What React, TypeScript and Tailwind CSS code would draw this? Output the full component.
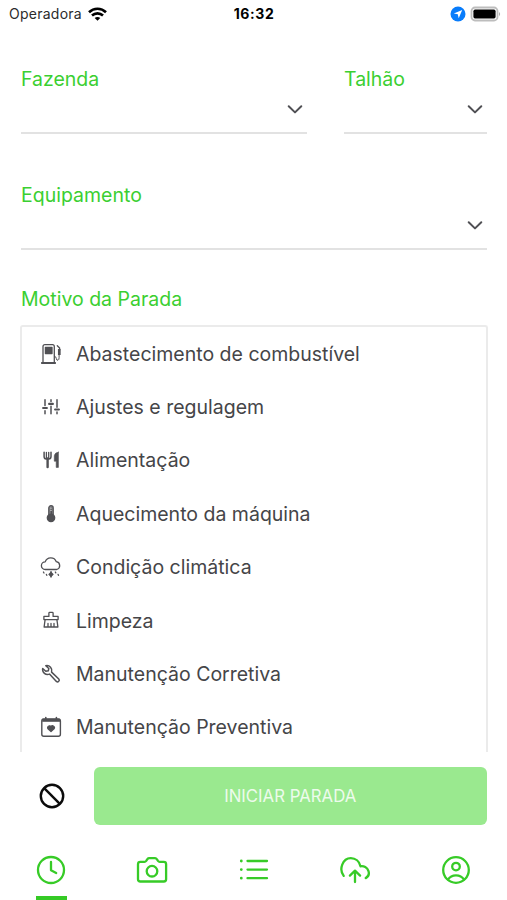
import { ReactNode } from "react";

interface ReasonIconProps {
  children: ReactNode;
}

const ReasonIcon: React.FC<ReasonIconProps> = ({ children }) => (
  <svg
    width="24"
    height="24"
    viewBox="0 0 24 24"
    fill="none"
    stroke="#505054"
    strokeWidth="1.3"
    strokeLinecap="round"
    strokeLinejoin="round"
    className="shrink-0"
  >
    {children}
  </svg>
);

const reasons = [
  {
    label: "Abastecimento de combustível",
    icon: (
      <ReasonIcon>
        <path d="M4 20.5V4.6Q4 2.7 5.9 2.7h7.6q1.8 0 1.8 1.9v15.9" />
        <path d="M2.8 21h13.4" strokeWidth="1.8" />
        <path d="M6.4 5.3h6.6v6.2H6.4z" fill="#505054" />
        <path d="M15.5 14.2q1.6.2 1.8 2.3t1.7 1.7q1.1-.4 1.1-2.5V12.5" strokeWidth="1" />
        <path d="M20.3 7v6" strokeWidth="2.7" strokeLinecap="butt" />
        <path d="M18.3 3.8l2.3 2.2v2" />
      </ReasonIcon>
    ),
  },
  {
    label: "Ajustes e regulagem",
    icon: (
      <ReasonIcon>
        <path d="M6 4.8v5.8M6 15.7v3M12 4.8v1.6M12 11.3v7.4M18 4.8v7.5M18 17v1.7" strokeWidth="1.5" />
        <path d="M4.1 13h3.8M10.1 8.9h3.8M16.1 14.5h3.8" strokeWidth="2.1" />
      </ReasonIcon>
    ),
  },
  {
    label: "Alimentação",
    icon: (
      <ReasonIcon>
        <path d="M5.1 4.3v4.2q0 2.4 2.2 2.6h2.4q2.3-.2 2.3-2.6V4.3" strokeWidth="1.5" />
        <path d="M7.4 4.3v6M9.7 4.3v6" strokeWidth="1.3" />
        <path d="M8.6 10.5v8.6" strokeWidth="2.4" />
        <path d="M19.4 4.2v15.2h-2.2v-6.2h-1.9V7.7q.5-3.1 4.1-3.5z" fill="#505054" strokeWidth=".6" />
      </ReasonIcon>
    ),
  },
  {
    label: "Aquecimento da máquina",
    icon: (
      <ReasonIcon>
        <path d="M9.8 12.6V5.9a2.2 2.2 0 0 1 4.4 0v6.7" fill="#8a8a8e" />
        <circle cx="12" cy="15.8" r="3.7" fill="#505054" />
        <path d="M12.3 6v7" strokeWidth="1.6" />
        <path d="M11.4 6.2h1.2M11.4 8.3h1.2" stroke="#ddd" strokeWidth=".7" />
      </ReasonIcon>
    ),
  },
  {
    label: "Condição climática",
    icon: (
      <ReasonIcon>
        <path d="M6.2 14.5a3.8 3.8 0 0 1 0-7.6 5.9 5.9 0 0 1 11.1-.2 4 4 0 0 1 .5 7.8z" />
        <path d="M4.4 17l.6 1M7.4 19.4l.4.9M16.3 17l.5.9M19.1 19.4l.4.9" />
        <path d="M12 16.7v5.3" strokeWidth="1.5" />
        <path d="M12 17.5l2 1.9-2 1.9-2-1.9z" fill="#505054" />
      </ReasonIcon>
    ),
  },
  {
    label: "Limpeza",
    icon: (
      <ReasonIcon>
        <path d="M4.9 11.6V8.4h5V5.2q0-.8.8-.8h2.6q.8 0 .8.8v3.2h5v3.2z" />
        <path d="M6.1 11.7l-1 7.3h13.8l-1-7.3M9 15.5v3.2M12 15.5v3.2M15 15.5v3.2" />
      </ReasonIcon>
    ),
  },
  {
    label: "Manutenção Corretiva",
    icon: (
      <ReasonIcon>
        <path
          d="M6.8 3.7l3 2.8-.5 2.3-2.5.5-3.1-2.8a5 5 0 0 0 6.8 5.6l6.9 7.3a1.7 1.7 0 0 0 2.4-2.4l-7.2-6.9A5 5 0 0 0 6.8 3.7z"
          strokeWidth="1.5"
        />
      </ReasonIcon>
    ),
  },
  {
    label: "Manutenção Preventiva",
    icon: (
      <ReasonIcon>
        <rect x="2.8" y="4" width="18.6" height="17.3" rx="2" strokeWidth="1.4" />
        <path d="M3.2 5.3h17.8" strokeWidth="3" strokeLinecap="butt" />
        <path d="M6.8 2.6v2M17.4 2.6v2" strokeWidth="1.6" />
        <path d="M12 16.6l-3-2.8a1.7 1.7 0 0 1 3-2.2 1.7 1.7 0 0 1 3 2.2z" fill="#505054" />
      </ReasonIcon>
    ),
  },
];

interface SelectFieldProps {
  label: string;
  className?: string;
}

const SelectField: React.FC<SelectFieldProps> = ({ label, className }) => (
  <div className={className}>
    <label className="block h-6 text-[19.5px] leading-6 text-[#3bcf31]">{label}</label>
    <button className="flex h-[43px] w-full items-start justify-end border-b-2 border-[#e2e2e2] pt-[10px] pr-1">
      <svg
        width="16"
        height="16"
        viewBox="0 0 16 16"
        fill="none"
        stroke="#505054"
        strokeWidth="2"
        strokeLinecap="round"
        strokeLinejoin="round"
      >
        <path d="M1.7 5.3L8 11.4l6.3-6.1" />
      </svg>
    </button>
  </div>
);

const tabs = [
  {
    name: "clock",
    icon: (
      <>
        <circle cx="16" cy="16" r="13" />
        <path d="M16 8v8.3l5.2 2.7" />
      </>
    ),
  },
  {
    name: "camera",
    icon: (
      <>
        <path d="M4.3 7.9h4.2q1 0 1.7-1l1.2-1.8q.7-1 1.8-1h5.9q1.1 0 1.7 1L22 6.9q.7 1 1.7 1h4.1q2.3 0 2.3 2.3v15q0 2.3-2.3 2.3H4.3Q2 27.5 2 25.2v-15q0-2.3 2.3-2.3z" />
        <circle cx="16" cy="17.2" r="5.3" />
      </>
    ),
  },
  {
    name: "list",
    icon: (
      <>
        <path d="M9.5 7h19.5M9.5 15.6h19.5M9.5 24.2h19.5" />
        <path d="M3.3 7h.01M3.3 15.6h.01M3.3 24.2h.01" strokeWidth="2.8" />
      </>
    ),
  },
  {
    name: "upload",
    icon: (
      <>
        <path d="M4.7 21.9C-.4 15.3 3.6 4.2 11.8 4.2c4.7 0 8.600 3.3 9.7 8.1 3.3-.7 6.8 1.3 7.9 4.6 1 3-.1 5.9-2.7 7.2" />
        <path d="M16 28V16.8M10.9 21.6l5.1-5 5.1 5" />
      </>
    ),
  },
  {
    name: "profile",
    icon: (
      <>
        <circle cx="16" cy="16" r="12.8" />
        <circle cx="16" cy="12.6" r="3.8" />
        <path d="M8 25.6c3.5-5.6 12.5-5.6 16 0" />
      </>
    ),
  },
];

const StatusBar = () => (
  <header className="grid h-7 grid-cols-3 items-center pr-[7px] pb-px pl-[9px]">
    <div className="flex items-center gap-[6px] text-[14px] text-[#2b2b2b]">
      <span className="tracking-[0.25px]">Operadora</span>
      <svg width="19" height="14" viewBox="0 0 19 14" fill="none" stroke="#000" strokeWidth="2.6">
        <path d="M1 5.2c4.8-4.6 12.2-4.6 17 0" />
        <path d="M4 8.5c3.1-2.9 7.9-2.9 11 0" />
        <path d="M9.5 13.8L6.7 11c1.6-1.5 4-1.5 5.6 0z" fill="#000" stroke="none" />
      </svg>
    </div>
    <span className="pr-px text-center text-[14px] font-bold tracking-[0.6px]">16:32</span>
    <div className="-mr-px flex items-center justify-end gap-1">
      <svg width="16" height="16" viewBox="0 0 16 16">
        <circle cx="8" cy="8" r="7.5" fill="#087cfb" />
        <path d="M12.2 3.9L8.7 12.2l-.9-3.9-4-.8z" fill="#fff" />
      </svg>
      <svg width="31" height="16" viewBox="0 0 31 16">
        <rect x="1.5" y="1.5" width="26" height="13" rx="3.5" fill="#fff" stroke="#bdbdbd" strokeWidth="1.8" />
        <rect x="3.4" y="3.6" width="22.2" height="8.8" rx="1.6" fill="#000" />
        <path d="M29 5.9q2.3 2.1 0 4.4z" fill="#b0b0b0" />
      </svg>
    </div>
  </header>
);

export default function App() {
  return (
    <div className="flex h-[900px] w-[507px] flex-col overflow-hidden bg-white font-['Inter',sans-serif]">
      <StatusBar />

      <main className="flex min-h-0 flex-1 flex-col px-5">
        <div className="mt-[39px] flex gap-[37px]">
          <SelectField label="Fazenda" className="ml-px w-[286px]" />
          <SelectField label="Talhão" className="w-[143px]" />
        </div>
        <SelectField label="Equipamento" className="mt-[49px] ml-px w-[466px]" />

        <h2 className="mt-[37px] ml-px text-[19.5px] leading-6 text-[#3bcf31]">Motivo da Parada</h2>
        <ul className="mt-[14px] min-h-0 w-[468px] flex-1 overflow-hidden rounded-t-[3px] border-2 border-b-0 border-[#ebebeb] pl-[17px]">
          {reasons.map((reason) => (
            <li key={reason.label} className="flex h-[53.35px] items-center gap-[13px] text-[19.5px] text-[#454548]">
              {reason.icon}
              <span className="pt-[1.5px]">{reason.label}</span>
            </li>
          ))}
        </ul>
      </main>

      <div className="flex h-[90px] items-center pr-5 pb-[2px] pl-[38px]">
        <button aria-label="Cancelar">
          <svg width="28" height="28" viewBox="0 0 28 28" fill="none" stroke="#0b0b0b" strokeWidth="2.4">
            <circle cx="14" cy="14" r="11.2" />
            <path d="M6.2 6.2l15.6 15.6" />
          </svg>
        </button>
        <button className="ml-[27.5px] h-[58px] flex-1 rounded-[6px] bg-[#9ae98f] pt-[2px] text-[16.8px] text-[#edfbec]">
          INICIAR PARADA
        </button>
      </div>

      <nav className="flex h-[58px] justify-between px-[35px] pt-3">
        {tabs.map((tab, i) => (
          <button key={tab.name} aria-label={tab.name} className="flex w-8 flex-col items-center justify-between">
            <svg
              width="32"
              height="32"
              viewBox="0 0 32 32"
              fill="none"
              stroke="#37cb27"
              strokeWidth="2.3"
              strokeLinecap="round"
              strokeLinejoin="round"
            >
              {tab.icon}
            </svg>
            {i === 0 && <span className="h-[4px] w-[31px] bg-[#35ca25]" />}
          </button>
        ))}
      </nav>
    </div>
  );
}
